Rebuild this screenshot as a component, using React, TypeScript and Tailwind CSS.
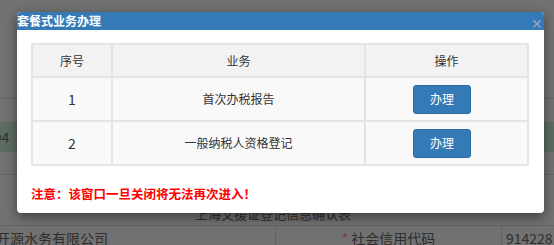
import React from "react";

const font = { fontFamily: '"Noto Sans CJK SC", "Noto Sans", sans-serif' };

export default function App() {
  return (
    <div className="relative w-[554px] h-[245px] overflow-hidden bg-[#717171] text-[12px]" style={font}>
      {/* background page (dimmed) */}
      <div className="flex flex-col w-full h-full">
        <div className="h-[99px] shrink-0 border-b border-[#646464]" />
        <div className="h-[23px] shrink-0" />
        <div className="h-[30px] shrink-0 bg-[#5c6c61] flex items-center text-[#2e2e2e] text-[14px]">
          <span className="ml-[-14px]">494</span>
        </div>
        <div className="h-[23px] shrink-0 border-b border-[#646464]" />
        <div className="h-[50px] shrink-0 flex items-end justify-center text-[#2e2e2e] text-[13px] pb-[2px]">
          <span className="mr-[8px]">上海文援证登记信息确认表</span>
        </div>
        <div className="h-[20px] shrink-0 flex border-t border-[#646464] text-[14px] text-[#2e2e2e]">
          <div className="w-[280px] border-r border-[#646464] ml-[-4px] pt-[2px]">开源水务有限公司</div>
          <div className="w-[226px] border-r border-[#646464] flex justify-center pt-[2px]">
            <span className="text-[#8a3a3a] mr-[3px]">*</span>
            <span>社会信用代码</span>
          </div>
          <div className="pl-[4px] pt-[2px]">914228</div>
        </div>
      </div>

      {/* dialog */}
      <div className="absolute left-[17px] top-[12px] w-[527px] h-[201px] bg-white rounded-[4px] shadow-[0_4px_12px_rgba(0,0,0,0.45)] overflow-hidden flex flex-col">
        <div className="h-[18px] bg-[#337ab7] flex items-center justify-between">
          <span className="text-white text-[12px] font-bold leading-none">套餐式业务办理</span>
          <span className="text-[#8fa9c6] text-[14px] leading-none mr-[1px] mt-[4px]">✕</span>
        </div>
        <div className="pl-[14px] pr-[15px] pt-[13px]">
          <table className="w-[498px] border-collapse text-[#333] text-[12px]">
            <thead>
              <tr className="h-[33px] bg-[#f2f2f2]">
                <th className="w-[80px] border-2 border-[#e4e4e4] font-normal">序号</th>
                <th className="w-[253px] border-2 border-[#e4e4e4] font-normal">业务</th>
                <th className="border-2 border-[#e4e4e4] font-normal">操作</th>
              </tr>
            </thead>
            <tbody>
              {[
                ["1", "首次办税报告"],
                ["2", "一般纳税人资格登记"],
              ].map(([n, t]) => (
                <tr key={n} className="h-[44px] bg-[#f9f9f9]">
                  <td className="border-2 border-[#e4e4e4] text-center text-[14px]">{n}</td>
                  <td className="border-2 border-[#e4e4e4] text-center">{t}</td>
                  <td className="border-2 border-[#e4e4e4] text-center">
                    <button className="w-[58px] h-[29px] bg-[#337ab7] text-white rounded-[3px] border border-[#2e6da4] text-[12px] mr-[9px]">
                      办理
                    </button>
                  </td>
                </tr>
              ))}
            </tbody>
          </table>
          <div className="mt-[19px] text-[#ff0000] font-bold text-[12.5px]">注意：该窗口一旦关闭将无法再次进入！</div>
        </div>
      </div>
    </div>
  );
}
